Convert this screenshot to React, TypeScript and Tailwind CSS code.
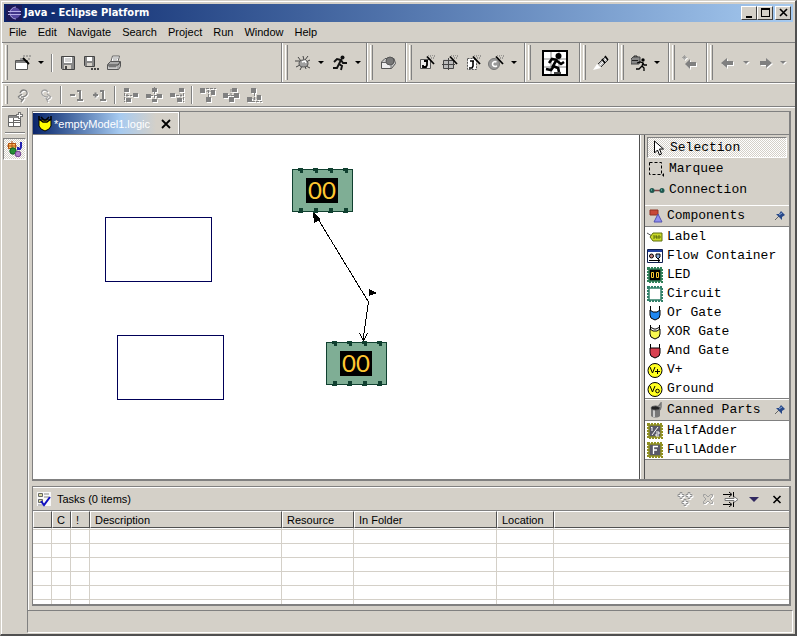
import React, { ReactNode } from "react";
import clsx from "clsx";

export default function App() {
  return (
    <div className="flex min-h-screen flex-col border-t border-l border-b-2 border-r-2 border-t-[#d4d0c8] border-l-[#d4d0c8] border-b-[#505050] border-r-[#505050] bg-[#d4d0c8] font-['Liberation_Sans',sans-serif] text-[11px] leading-4 text-black">
      <div className="flex grow flex-col border-t border-l border-white">
        <TitleBar />
        <MenuBar />
        <Toolbars />
        <div className="flex grow">
          <PerspectiveBar />
          <main className="flex min-w-0 grow flex-col border-l border-white pt-[3px] pr-1 pb-1 pl-[3px]">
            <Editor />
            <Tasks />
          </main>
        </div>
        <footer className="mr-0.5 mb-px ml-[25px] h-[23px] border border-t-[#808080] border-r-white border-b-white border-l-[#808080]" />
      </div>
    </div>
  );
}

type IconProps = {
  children: ReactNode;
  size?: number;
  disabled?: boolean;
};

const Icon = ({ children, size = 16, disabled }: IconProps) => (
  <svg
    width={size}
    height={size}
    viewBox={`0 0 ${size} ${size}`}
    fill="none"
    aria-hidden="true"
    className={clsx("shrink-0", disabled && "drop-shadow-[1px_1px_0_#fff]")}
  >
    {children}
  </svg>
);

function TitleBar() {
  return (
    <header className="mx-0.5 mt-0.5 flex h-[18px] items-center bg-linear-to-r from-[#0a246a] to-[#a6caf0] px-0.5">
      <Icon>
        <rect width="16" height="16" fill="#1c1a58" />
        <circle cx="9" cy="8" r="5.500" fill="#5548a0" />
        <path d="M10 2a6 6 0 1 0 0 12" stroke="#a9a2dd" />
        <path d="M2 6.500h13M2 9.500h13" stroke="#b5aee6" />
        <path d="M3 8h12" stroke="#2b2270" />
      </Icon>
      <h1 className="ml-0.5 grow font-['DejaVu_Sans_Condensed','Noto_Sans',sans-serif] text-[11px] font-bold text-white">
        Java - Eclipse Platform
      </h1>
      <WindowButton label="Minimize">
        <path d="M3 9h6v2H3z" fill="#000" />
      </WindowButton>
      <WindowButton label="Maximize">
        <path d="M2 1h9v9H2zM3 3v6h7V3z" fill="#000" fillRule="evenodd" />
      </WindowButton>
      <span className="w-0.5" />
      <WindowButton label="Close">
        <path d="M3 2l7 7M10 2l-7 7" stroke="#000" strokeWidth="1.600" />
      </WindowButton>
    </header>
  );
}

const WindowButton = ({ label, children }: { label: string; children: ReactNode }) => (
  <button
    aria-label={label}
    className="flex h-3.5 w-4 items-center justify-center border border-t-white border-r-[#404040] border-b-[#404040] border-l-white bg-[#d4d0c8]"
  >
    <Icon size={12}>{children}</Icon>
  </button>
);

const menus = ["File", "Edit", "Navigate", "Search", "Project", "Run", "Window", "Help"];

function MenuBar() {
  return (
    <nav className="flex h-5 items-center gap-[11px] pl-[7px]">
      {menus.map((menu) => (
        <button key={menu}>{menu}</button>
      ))}
    </nav>
  );
}

type ToolProps = {
  label: string;
  children: ReactNode;
  disabled?: boolean;
};

const Tool = ({ label, children, disabled }: ToolProps) => (
  <button aria-label={label} disabled={disabled} className="flex w-[23px] shrink-0 justify-center">
    <Icon disabled={disabled}>{children}</Icon>
  </button>
);

const Drop = ({ label, disabled }: { label: string; disabled?: boolean }) => (
  <button aria-label={label} disabled={disabled} className="flex w-3.5 shrink-0 justify-center">
    <Icon size={6} disabled={disabled}>
      <path d="M0 1h6L3 4z" fill={disabled ? "#808080" : "#000"} />
    </Icon>
  </button>
);

const Divider = () => (
  <span className="mx-[3px] h-[18px] w-0.5 shrink-0 border-r border-l border-r-white border-l-[#808080]" />
);

const Group = ({ className, children }: { className: string; children: ReactNode }) => (
  <div
    className={clsx(
      "flex shrink-0 items-center border-r border-l border-r-[#808080] border-l-white pl-0.5",
      className
    )}
  >
    <span className="mr-[3px] h-[calc(100%-4px)] w-[3px] border-r border-l border-r-[#808080] border-l-white" />
    {children}
  </div>
);

const Wand = () => (
  <>
    <path d="M8 1.500l7 7.500" stroke="#000" strokeWidth="1.800" />
    <path d="M11 1h1M13 0h1M15 1h1M14 3h1M12 3h1M9 0h1" stroke="#606060" />
  </>
);

const Runner = () => (
  <>
    <circle cx="10.500" cy="2.500" r="2" fill="#111" />
    <path
      d="M2 7l3-3 4 1-2 4 3 2-1 4M7 9l-2 4H1M9 5l2 3h4"
      stroke="#111"
      strokeWidth="1.900"
    />
  </>
);

function Toolbars() {
  return (
    <div className="border-b border-white">
      <div className="flex h-[41px] border-t border-b border-[#808080]">
        <Group className="w-[280px]">
          <Tool label="New">
            <path d="M.5 5.500h12v9H.5z" fill="#fff" stroke="#555" />
            <path d="M1 6h11v2H1z" fill="#808080" />
            <path d="M1 5h4V3h3v2" fill="#999" />
            <path d="M8 3l6 6" stroke="#000" strokeWidth="1.800" />
            <path d="M8 1h2M11 1h2M14 1h2M13 4h2" stroke="#777" />
          </Tool>
          <Drop label="New options" />
          <Divider />
          <Tool label="Save">
            <path d="M1.500 1.500h13v13h-12l-1-1z" fill="#888" stroke="#444" />
            <path d="M4 2h8v6H4z" fill="#fff" />
            <path d="M5 4h6M5 6h6" stroke="#aaa" />
            <path d="M4 10h7v4H4z" fill="#d4d0c8" />
            <path d="M5 11h2v3H5z" fill="#444" />
          </Tool>
          <Tool label="Save As">
            <path d="M1.500 1.500h10v10h-9l-1-1z" fill="#888" stroke="#444" />
            <path d="M4 2h5v4H4z" fill="#fff" />
            <path d="M4 8h5v3H4z" fill="#d4d0c8" />
            <path d="M8 13h2v2H8zM11 13h2v2h-2zM14 13h2v2h-2z" fill="#444" />
          </Tool>
          <Tool label="Print">
            <path d="M4.500 8l2-7h7l-2 7z" fill="#fff" stroke="#666" />
            <path d="M7 3h5M7 5h4" stroke="#999" />
            <path d="M1.500 9.500l3-3h10v5l-2 3h-11z" fill="#aaa" stroke="#555" />
            <path d="M2 10h10l2-3M3 12h7" stroke="#444" />
            <path d="M2 13h9" stroke="#eee" />
          </Tool>
        </Group>
        <Group className="w-[85px]">
          <Tool label="Debug">
            <path d="M8 1l1 4M3 2l3 4M0 6h5M1 12l4-2M5 15l2-4M11 14l-1-3M15 13l-4-2M15 5l-4 2M13 1l-3 4" stroke="#444" />
            <ellipse cx="8.500" cy="8.500" rx="4.500" ry="3.500" fill="#a0a0a0" stroke="#555" />
            <path d="M7 7l3-1 1 2" stroke="#fff" strokeWidth="1.500" />
          </Tool>
          <Drop label="Debug options" />
          <Tool label="Run">
            <Runner />
          </Tool>
          <Drop label="Run options" />
        </Group>
        <Group className="w-[39px]">
          <Tool label="External resource">
            <path d="M1.500 7L5 3.500h9l1.500 5-4 5h-10z" fill="#ccc" stroke="#555" />
            <path d="M2 8h9v5H2z" fill="#eee" />
            <circle cx="10" cy="6" r="4" fill="#777" stroke="#555" />
            <path d="M2 7.500h5M11 13V9" stroke="#666" />
          </Tool>
        </Group>
        <Group className="w-[119px]">
          <Tool label="New Java Project">
            <path d="M1.500 4.500h10v9h-10z" fill="#eee" stroke="#555" />
            <path d="M8 5v5l-1 2H4v-2M5 6h4" stroke="#000" strokeWidth="1.800" />
            <Wand />
          </Tool>
          <Tool label="New Package">
            <path d="M1.500 4.500h10v9h-10z" fill="#bbb" />
            <path d="M1.500 5.500h10v8h-10zM6.500 3v12M0 9.500h13" stroke="#444" />
            <Wand />
          </Tool>
          <Tool label="New Interface">
            <path d="M2.500 3.500h6l3 3v8h-9z" fill="#fff" stroke="#555" strokeDasharray="2 1" />
            <path d="M8 6v5l-1 2H4M5 6h4" stroke="#000" strokeWidth="1.600" />
            <Wand />
          </Tool>
          <Tool label="New Class">
            <circle cx="6" cy="9" r="5.500" fill="#999" stroke="#777" />
            <path d="M8.500 7c-4-2-6 4.500-1 4.500l1.500-.5" stroke="#fff" strokeWidth="1.600" />
            <Wand />
          </Tool>
          <Drop label="Class options" />
        </Group>
        <Group className="w-[55px]">
          <button aria-label="Run sample" className="ml-2 shrink-0">
            <Icon size={26}>
              <path d="M1 1h24v24H1z" fill="#fff" stroke="#000" strokeWidth="2" />
              <path d="M9 2v22M17 2v22M2 9h22M2 17h22" stroke="#888" />
              <circle cx="16.500" cy="6" r="3" fill="#000" />
              <path d="M15 9l-4 7 5 2 1 4M12 16l-3 4-5-1M15 10l-5-1-3 4M15 11l4 3 3-2" stroke="#000" strokeWidth="2.600" />
              <path d="M12 23h7" stroke="#444" strokeWidth="2" />
            </Icon>
          </button>
        </Group>
        <Group className="w-[38px]">
          <Tool label="Search">
            <path d="M0 15l4-6 4 4z" fill="#fff" />
            <path d="M5 9l7-7 3 3-7 7z" fill="#bbb" />
            <path d="M5 9l7-7M8 12l7-7" stroke="#333" />
            <path d="M7 10l6-6" stroke="#fff" />
            <path d="M12 1l3 4M9 4l3 4" stroke="#000" strokeWidth="1.500" />
          </Tool>
        </Group>
        <Group className="w-[51px]">
          <Tool label="External Tools">
            <path d="M0 4l2-2h7v5l-1 2H0z" fill="#888" stroke="#444" />
            <path d="M1 5.500h6M3 2V1h3v1" stroke="#222" />
            <circle cx="12" cy="5" r="1.700" fill="#000" />
            <path d="M6 8l3-1 3 1-1 3 2 2v3M11 11l-3 3H5M12 8l1 2h3" stroke="#000" strokeWidth="1.300" />
          </Tool>
          <Drop label="External Tools options" />
        </Group>
        <Group className="w-[38px]">
          <Tool label="Last Edit Location" disabled>
            <path d="M3 9l5-5v3h6v4H8v3z" fill="#808080" />
            <path d="M1 1l3 3M4 1L1 4M2.500 0v5M0 2.500h5" stroke="#909090" strokeWidth=".7" />
          </Tool>
        </Group>
        <Group className="grow border-r-transparent">
          <Tool label="Back" disabled>
            <path d="M1 8l6-5v3h6v4H7v3z" fill="#808080" />
          </Tool>
          <Drop label="Back history" disabled />
          <Tool label="Forward" disabled>
            <path d="M15 8L9 3v3H3v4h6v3z" fill="#808080" />
          </Tool>
          <Drop label="Forward history" disabled />
        </Group>
      </div>
      <div className="flex h-6 border-t border-b border-t-white border-b-[#808080]">
        <Group className="border-r-transparent">
          <Tool label="Undo" disabled>
            <path d="M5 6c2-5 8-3 7 1-1 2-3 3-6 3M3 10l4-3M3 10l4 3M9 11l-3 4" stroke="#808080" strokeWidth="1.300" />
          </Tool>
          <Tool label="Redo" disabled>
            <path d="M10 5C7 1 2 4 4 7c1 2 3 3 6 3M13 10L9 7M13 10l-4 3M8 11l2 4" stroke="#a0a0a0" strokeWidth="1.300" />
          </Tool>
          <Divider />
          <Tool label="Decrement" disabled>
            <path d="M1 8h5M8 4h3v9M8 13h6" stroke="#808080" strokeWidth="2" />
          </Tool>
          <Tool label="Increment" disabled>
            <path d="M1 8h5M3.500 5.500v5M8 4h3v9M8 13h6" stroke="#808080" strokeWidth="2" />
          </Tool>
          <Divider />
          <Tool label="Align Left" disabled>
            <path d="M1 1h5v4H1zM10 6h5v4h-5zM3 11h5v4H3z" fill="#808080" />
            <path d="M1.500 6v9M3 8.500h6M5 6.500l-2 2 2 2" stroke="#808080" strokeDasharray="3 1" />
          </Tool>
          <Tool label="Align Center" disabled>
            <path d="M6 1h5v4H6zM0 7h5v4H0zM11 7h5v4h-5zM6 12h5v3H6z" fill="#808080" />
            <path d="M8.500 0v16M4 8.500h9" stroke="#808080" strokeDasharray="3 1" />
          </Tool>
          <Tool label="Align Right" disabled>
            <path d="M10 1h5v4h-5zM1 6h5v4H1zM8 11h5v4H8z" fill="#808080" />
            <path d="M14.500 6v9M7 8.500h6M11 6.500l2 2-2 2" stroke="#808080" strokeDasharray="3 1" />
          </Tool>
          <Divider />
          <Tool label="Align Top" disabled>
            <path d="M0 1h5v5H0zM6 10h5v5H6zM11 3h4v5h-4z" fill="#808080" />
            <path d="M6 1.500h10M8.500 3v7M6.500 5l2-2 2 2" stroke="#808080" strokeDasharray="3 1" />
          </Tool>
          <Tool label="Align Middle" disabled>
            <path d="M0 6h5v5H0zM6 10h5v5H6zM11 6h5v5h-5zM9 1h5v4H9z" fill="#808080" />
            <path d="M0 8.500h16M8 2v12" stroke="#808080" strokeDasharray="3 1" />
          </Tool>
          <Tool label="Align Bottom" disabled>
            <path d="M1 10h5v5H1zM5 1h5v5H5zM11 8h4v5h-4z" fill="#808080" />
            <path d="M6 14.500h10M8.500 6v7M6.500 11l2 2 2-2" stroke="#808080" strokeDasharray="3 1" />
          </Tool>
        </Group>
      </div>
    </div>
  );
}

// checkerboard used behind pressed toggle buttons
const pressed =
  "border border-t-[#808080] border-r-white border-b-white border-l-[#808080] bg-[repeating-conic-gradient(#fff_0_25%,#d4d0c8_0_50%)] bg-size-[2px_2px]";

function PerspectiveBar() {
  return (
    <aside className="flex w-[26px] shrink-0 flex-col items-center border-r border-[#808080] pt-1">
      <button aria-label="Open Perspective">
        <Icon>
          <path d="M1.500 3.500h12v11h-12z" fill="#fff" stroke="#666" />
          <path d="M2 4h11v2H2z" fill="#888" />
          <path d="M6.500 6v8M2 10.500h11M6 8.500h7" stroke="#666" />
          <path d="M12.500 0v7M9 3.500h7" stroke="#777" strokeWidth="3" />
          <path d="M12.500 1v5M10 3.500h5" stroke="#fff" />
        </Icon>
      </button>
      <span className="mt-1 h-0.5 w-5 border-t border-b border-t-[#808080] border-b-white" />
      <button
        aria-label="Java perspective"
        className={clsx("mt-1 flex h-[22px] w-[23px] items-center justify-center", pressed)}
      >
        <Icon>
          <path d="M1 2h8v6H1z" fill="#ffc060" />
          <path d="M1.500 2.500h7v5h-7zM5 0v9M0 5h10" stroke="#b05010" />
          <path d="M14 1v5l-1 2h-2V6" stroke="#2020b0" strokeWidth="2" />
          <circle cx="6" cy="10" r="3.200" fill="#259035" stroke="#106020" />
          <circle cx="11" cy="13" r="2.800" fill="#b080c8" stroke="#704090" />
        </Icon>
      </button>
    </aside>
  );
}

function Editor() {
  return (
    <section className="flex grow flex-col border-r-2 border-b-2 border-l border-[#808080]">
      <div className="flex h-6 shrink-0 border-t border-b border-[#808080]">
        <div className="flex w-[146px] items-center border-t border-r border-white bg-linear-to-r from-[#0a246a] via-[#a6caf0] via-60% to-[#d4d0c8] to-85% pl-1 text-white">
          <Icon>
            <path d="M2 4h12v6l-2 3-4 2-4-2-2-3z" fill="#ff0" stroke="#000" />
            <path d="M2 4V0M14 4V0M2 3l4 3h4l4-3M4 1l3 3h2l3-3" stroke="#000" strokeWidth="1.500" />
          </Icon>
          <span className="ml-px grow whitespace-nowrap">*emptyModel1.logic</span>
          <button aria-label="Close editor" className="mr-1.5">
            <Icon size={12}>
              <path d="M2 2l8 8M10 2l-8 8" stroke="#000" strokeWidth="1.800" />
            </Icon>
          </button>
        </div>
        <div className="grow border-l border-[#808080]" />
      </div>
      <div className="flex grow">
        <Diagram />
        <div className="w-1 shrink-0 border-l border-white" />
        <Palette />
      </div>
    </section>
  );
}

const pins = [6, 21, 36, 51];

const Led = ({ x, y }: { x: number; y: number }) => (
  <g transform={`translate(${x} ${y})`}>
    <rect x=".5" y="2.500" width="60" height="42" fill="#7fae95" stroke="#104030" />
    {pins.map((pin) => (
      <g key={pin} fill="#104030">
        <path d={`M${pin} 1h5v5h-3v-2h-2z`} />
        <path d={`M${pin + 1} 41h4v5h-5v-2h1z`} />
      </g>
    ))}
    <rect x="14" y="11" width="32" height="25" fill="#000" />
    <text
      x="30"
      y="32"
      textAnchor="middle"
      className="font-['Lato',sans-serif] text-[24px]"
      fill="#ffc832"
    >
      00
    </text>
  </g>
);

function Diagram() {
  return (
    <div className="relative min-h-[340px] min-w-0 grow overflow-hidden border-r border-[#505050] bg-white">
      <svg
        width="607"
        height="340"
        shapeRendering="crispEdges"
        className="absolute top-0 left-0"
        role="img"
        aria-label="Logic diagram"
      >
        <rect x="72.500" y="82.500" width="106" height="64" stroke="#000058" fill="#fff" />
        <rect x="84.500" y="200.500" width="106" height="64" stroke="#000058" fill="#fff" />
        <path d="M282 79l53.500 88-5.500 38" stroke="#000" fill="none" />
        <path d="M280 77l8 7-7 4zM336 154l8 4-8 3z" fill="#000" />
        <path d="M326.500 198l4 8 4-8" stroke="#000" fill="none" />
        <Led x={259} y={32} />
        <Led x={293} y={205} />
      </svg>
    </div>
  );
}

const Gate = ({ fill, top }: { fill: string; top: string }) => (
  <>
    <path d={`M3 5${top}v5l-1 3-4 2-4-2-1-3z`} fill={fill} stroke="#000" />
    <path d="M3.500 5V1M12.500 5V1" stroke="#000" />
  </>
);

const Chip = ({ fill, edge, children }: { fill: string; edge: string; children?: ReactNode }) => (
  <>
    <rect x="2" y="2" width="12" height="12" fill={fill} stroke={edge} strokeWidth="1.500" />
    <path d="M1 1h14v14H1z" stroke={edge} strokeWidth="2" strokeDasharray="2 1" />
    {children}
  </>
);

const components = [
  {
    name: "Label",
    icon: (
      <>
        <path d="M0 4l5 3" stroke="#555" />
        <path d="M3 8l3-4h9v8H6z" fill="#c8d828" stroke="#607010" />
        <path d="M7 6v4M9 6l1 4M12 6v4M7 8h7" stroke="#607010" />
      </>
    ),
  },
  {
    name: "Flow Container",
    icon: (
      <>
        <path d="M.5 1.500h15v13H.5z" fill="#fff" stroke="#102050" />
        <path d="M1 2h14v2H1z" fill="#2040a0" />
        <circle cx="4.500" cy="8" r="2" fill="#c08080" stroke="#000" />
        <path d="M9 6h4v3l-2 2-2-2z" fill="#80a0d0" stroke="#000" />
        <path d="M2 12.500h11M11 11l2 1.500-2 1.500" stroke="#000" />
      </>
    ),
  },
  {
    name: "LED",
    icon: (
      <Chip fill="#000" edge="#308058">
        <path d="M4.500 5.500h2v5h-2zM9.500 5.500h2v5h-2z" stroke="#ffc832" />
      </Chip>
    ),
  },
  { name: "Circuit", icon: <Chip fill="#fff" edge="#308068" /> },
  { name: "Or Gate", icon: <Gate fill="#2088f0" top="l3 2h4l3-2" /> },
  {
    name: "XOR Gate",
    icon: (
      <>
        <Gate fill="#f8f850" top="l3 2h4l3-2" />
        <path d="M3 3l4 2h2l4-2" stroke="#000" />
      </>
    ),
  },
  { name: "And Gate", icon: <Gate fill="#d84050" top="h10" /> },
  {
    name: "V+",
    icon: (
      <>
        <circle cx="8" cy="8.500" r="7" fill="#ffff20" stroke="#000" />
        <path d="M3 5l2.500 6L8 5M8 9.500h5M10.500 7v5" stroke="#000" />
      </>
    ),
  },
  {
    name: "Ground",
    icon: (
      <>
        <circle cx="8" cy="8.500" r="7" fill="#ffff20" stroke="#000" />
        <path d="M3 5l2.500 6L8 5" stroke="#000" />
        <circle cx="10.500" cy="10" r="1.800" stroke="#000" />
      </>
    ),
  },
];

const cannedParts = [
  {
    name: "HalfAdder",
    icon: (
      <Chip fill="#585868" edge="#909020">
        <path d="M4 5l1-1v4M5 12l6-8M9 9h3v2H9v2h3" stroke="#fff" />
      </Chip>
    ),
  },
  {
    name: "FullAdder",
    icon: (
      <Chip fill="#585868" edge="#909020">
        <path d="M6.500 12V4.500H11M6 8h4" stroke="#fff" strokeWidth="1.300" />
      </Chip>
    ),
  },
];

type DrawerProps = {
  title: string;
  icon: ReactNode;
  items: { name: string; icon: ReactNode }[];
};

const Drawer = ({ title, icon, items }: DrawerProps) => (
  <div className="border-b border-[#808080] bg-white">
    <div className="flex h-[22px] items-center border-t border-b border-t-white border-b-[#808080] bg-[#d4d0c8] pr-1 pl-[3px]">
      <Icon>{icon}</Icon>
      <h2 className="ml-[3px] grow">{title}</h2>
      <button aria-label={`Pin ${title}`}>
        <Icon size={10}>
          <path d="M0 9l4-4" stroke="#666" />
          <path d="M1 3l6 6V6l3-2-4-4-2 3z" fill="#284888" />
          <path d="M4 4l3-2" stroke="#90b0e0" />
        </Icon>
      </button>
    </div>
    {items.map((item) => (
      <button key={item.name} className="flex h-[19px] w-full items-center pl-0.5">
        <Icon>{item.icon}</Icon>
        <span className="ml-1 whitespace-nowrap">{item.name}</span>
      </button>
    ))}
  </div>
);

function Palette() {
  return (
    <aside className="w-[145px] shrink-0 border-l border-[#505050] font-['Liberation_Mono',monospace] text-[13px]">
      <div className="flex flex-col px-0.5 pt-0.5 pb-1">
        <button className={clsx("flex h-[21px] items-center pl-0.5", pressed)}>
          <Icon>
            <path d="M4.500 1v12l3-3 2 5 2-1-2-5h4z" fill="#fff" stroke="#000" />
          </Icon>
          <span className="ml-1">Selection</span>
        </button>
        <button className="flex h-[21px] items-center pl-0.5">
          <Icon>
            <path d="M.5 1.500h12v12H.5z" stroke="#000" strokeDasharray="3 2" />
            <path d="M15 12v4l-2-2z" fill="#000" />
          </Icon>
          <span className="ml-1">Marquee</span>
        </button>
        <button className="flex h-[22px] items-center pl-0.5">
          <Icon>
            <path d="M3 8.500h10" stroke="#804040" strokeWidth="1.500" />
            <circle cx="3" cy="8.500" r="2.500" fill="#205850" />
            <circle cx="13" cy="8.500" r="2.500" fill="#205850" />
            <path d="M2 8h1M12 8h1" stroke="#80e0d0" />
          </Icon>
          <span className="ml-1">Connection</span>
        </button>
      </div>
      <Drawer
        title="Components"
        items={components}
        icon={
          <>
            <path d="M2 2h8v5H2z" fill="#c84838" stroke="#903020" />
            <path d="M10 6l4 8H6z" fill="#9090f0" stroke="#5050b0" />
          </>
        }
      />
      <Drawer
        title="Canned Parts"
        items={cannedParts}
        icon={
          <>
            <path d="M3 6v8c2 2 7 2 9 0V6z" fill="#777" />
            <path d="M6 8v7" stroke="#ccc" strokeWidth="2" />
            <ellipse cx="7.500" cy="6" rx="4.500" ry="2" fill="#222" stroke="#555" />
            <path d="M10 5l3-4v4l-1 3" stroke="#777" strokeWidth="1.500" />
          </>
        }
      />
    </aside>
  );
}

const columns = ["", "C", "!", "Description", "Resource", "In Folder", "Location", ""];

function Tasks() {
  return (
    <section className="mt-[5px] border-t border-r-2 border-b-2 border-l border-[#808080]">
      <div className="flex h-[23px] items-center border-t border-white pr-px pl-1">
        <Icon>
          <path d="M0 1h14v14H0z" fill="#f8f8f8" />
          <path d="M1.500 2.500h4v3h-4zM1.500 8.500h4v3h-4z" fill="#d8d8a0" stroke="#666" />
          <path d="M7 3h5M7 6h5M1 14h5" stroke="#888" />
          <path d="M4 10l3 4 6-8" stroke="#1010c0" strokeWidth="2" />
        </Icon>
        <h2 className="ml-1 grow">Tasks (0 items)</h2>
        <Tool label="New Task" disabled>
          <path
            d="M3 1.500h2v2h2v2H5v2H3v-2H1v-2h2zM11 1.500h2v2h2v2h-2v2h-2v-2H9v-2h2zM7 8.500h2v2h2v2H9v2H7v-2H5v-2h2z"
            fill="#fff"
            stroke="#909090"
          />
        </Tool>
        <Tool label="Delete Task" disabled>
          <path
            d="M3.500 3.500h2L8 6l2.500-2.500h2v2L10 8l2.500 2.500v2h-2L8 10l-2.500 2.500h-2v-2L6 8 3.500 5.500z"
            fill="#d4d0c8"
            stroke="#a0a0a0"
          />
        </Tool>
        <Tool label="Filter">
          <path d="M0 3.500h8M6 1l3 2.500L6 6M0 13.500h8M6 11l3 2.500L6 16M10.500 1v5M10.500 11v5" stroke="#000" />
          <path d="M2 7.500h9v-2l4 3-4 3v-2H2z" fill="#fff" stroke="#777" />
        </Tool>
        <Tool label="View Menu">
          <path d="M3 6h10l-5 5z" fill="#302860" />
        </Tool>
        <Tool label="Close view">
          <path d="M4.500 5l7 7M11.500 5l-7 7" stroke="#000" strokeWidth="1.600" />
        </Tool>
      </div>
      <table className="w-full table-fixed border-separate border-spacing-0 border-t border-[#808080] bg-white">
        <colgroup>
          <col className="w-[19px]" />
          <col className="w-[19px]" />
          <col className="w-[19px]" />
          <col className="w-[192px]" />
          <col className="w-[72px]" />
          <col className="w-[143px]" />
          <col className="w-[57px]" />
          <col />
        </colgroup>
        <thead>
          <tr>
            {columns.map((column, i) => (
              <th
                key={i}
                className="h-[17px] border-t border-r border-b border-l border-t-white border-r-[#505050] border-b-[#505050] border-l-white bg-[#d4d0c8] p-0 pl-1 text-left leading-[14px] font-normal last:border-r-0"
              >
                {column}
              </th>
            ))}
          </tr>
        </thead>
        <tbody>
          {["h-0.5", "h-3.5", "h-3.5", "h-3.5", "h-3.5", "h-3.5", "h-1"].map((height, row) => (
            <tr key={row} className="group">
              {columns.map((_, i) => (
                <td
                  key={i}
                  className={clsx(
                    "border-r border-b border-[#d4d0c8] p-0 last:border-r-0 group-last:border-b-0",
                    height
                  )}
                />
              ))}
            </tr>
          ))}
        </tbody>
      </table>
    </section>
  );
}
